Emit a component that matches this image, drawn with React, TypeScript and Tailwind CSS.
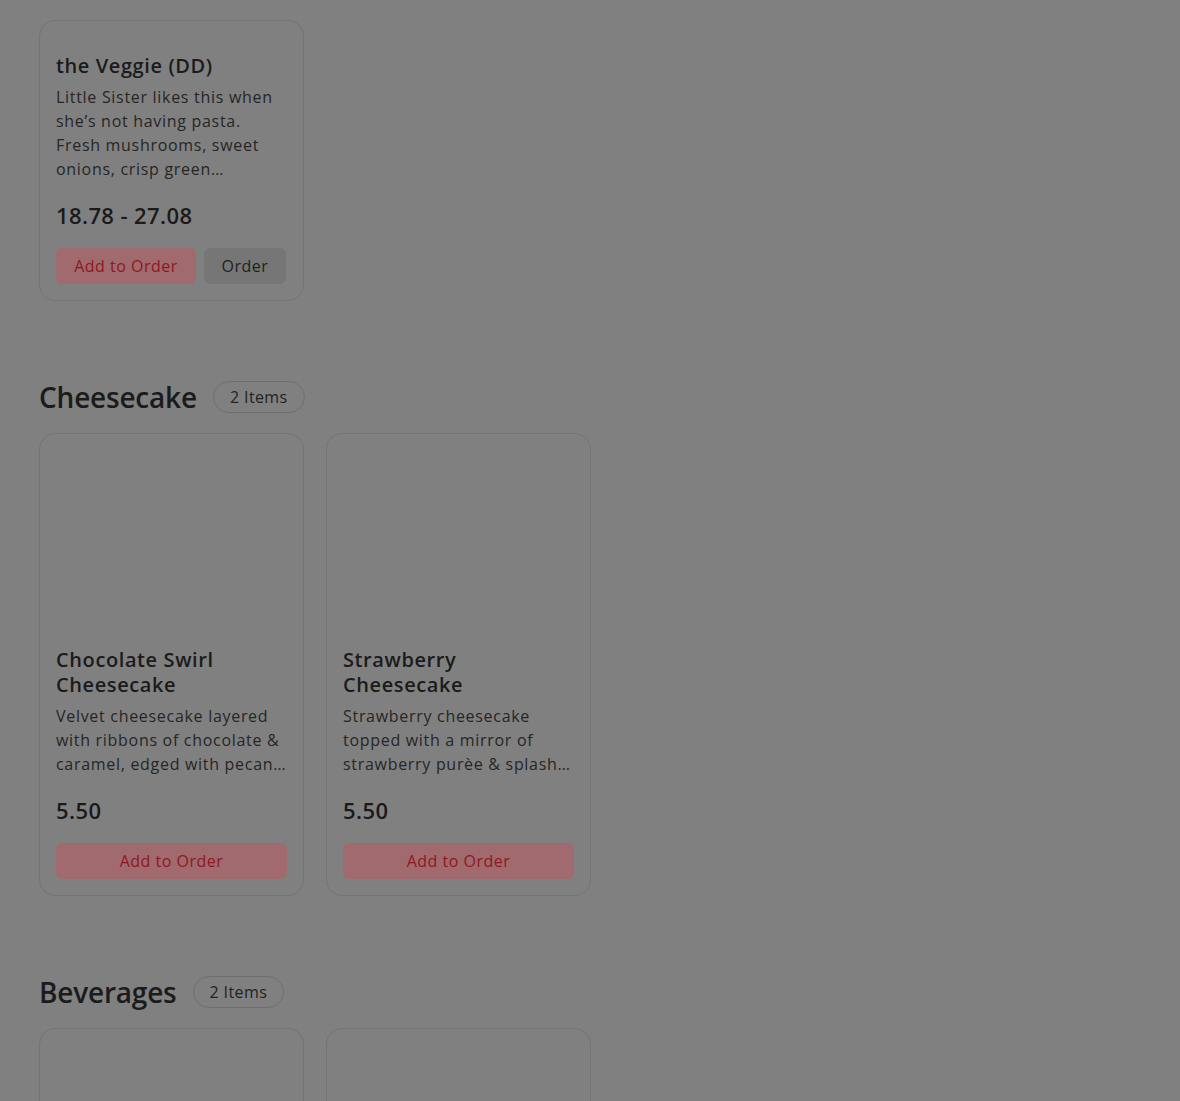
import React from "react";

type Item = {
  name: string;
  description: string;
  price: string;
  image?: boolean;
  order?: boolean;
  clamp?: number;
};

type Section = {
  title?: string;
  items: Item[];
};

const sections: Section[] = [
  {
    items: [
      {
        name: "the Veggie (DD)",
        description:
          "Little Sister likes this when she’s not having pasta. Fresh mushrooms, sweet onions, crisp green peppers, black olives and ripe tomatoes.",
        price: "18.78 - 27.08",
        order: true,
        clamp: 4,
      },
    ],
  },
  {
    title: "Cheesecake",
    items: [
      {
        name: "Chocolate Swirl Cheesecake",
        description:
          "Velvet cheesecake layered with ribbons of chocolate & caramel, edged with pecans and a graham crust.",
        price: "5.50",
        image: true,
      },
      {
        name: "Strawberry Cheesecake",
        description:
          "Strawberry cheesecake topped with a mirror of strawberry purèe & splash of whipped cream.",
        price: "5.50",
        image: true,
      },
    ],
  },
  {
    title: "Beverages",
    items: [
      { name: "", description: "", price: "", image: true },
      { name: "", description: "", price: "", image: true },
    ],
  },
];

const MenuCard = ({ item }: { item: Item }) => (
  <div className="flex w-[265px] flex-col rounded-2xl border border-[#747474]">
    {item.image && <div className="h-[181px]" />}
    {item.name && (
      <div className="px-4 pb-4 pt-[32px]">
        <h3 className="text-[20px] font-semibold leading-[25px] tracking-[0.6px] text-[#1b1b1b]">
          {item.name}
        </h3>
        <p
          className={`mt-[7px] text-[16px] leading-6 tracking-[0.7px] text-[#262626] ${
            item.clamp === 4 ? "line-clamp-4" : "line-clamp-3"
          }`}
        >
          {item.description}
        </p>
        <p className="mt-5 text-[22px] font-semibold leading-7 tracking-[0.4px] text-[#1a1a1a]">
          {item.price}
        </p>
        <div className="mt-[19px] flex gap-2">
          <button
            className={`h-9 rounded-md bg-[#a06a6e] text-[16px] tracking-[0.5px] text-[#8e1820] ${
              item.order ? "w-[140px]" : "w-full"
            }`}
          >
            Add to Order
          </button>
          {item.order && (
            <button className="h-9 w-[82px] rounded-md bg-[#767676] text-[16px] tracking-[0.5px] text-[#1f1f1f]">
              Order
            </button>
          )}
        </div>
      </div>
    )}
  </div>
);

export default function App() {
  return (
    <div
      className="h-[1101px] overflow-hidden bg-[#808080] pl-[39px] pt-5"
      style={{ fontFamily: '"Open Sans", "Noto Sans", sans-serif' }}
    >
      {sections.map((section, i) => (
        <section key={i} className={i > 0 ? "mt-20" : ""}>
          {section.title && (
            <div className="mb-5 flex h-8 items-center gap-4">
              <h2 className="text-[28px] font-semibold tracking-[-0.2px] text-[#1b1b1b]">
                {section.title}
              </h2>
              <span className="flex h-8 items-center rounded-full border border-[#6f6f6f] px-4 text-[16px] tracking-[0.4px] text-[#222]">
                {section.items.length} Items
              </span>
            </div>
          )}
          <div className="flex gap-[22px]">
            {section.items.map((item, j) => (
              <MenuCard key={j} item={item} />
            ))}
          </div>
        </section>
      ))}
    </div>
  );
}
